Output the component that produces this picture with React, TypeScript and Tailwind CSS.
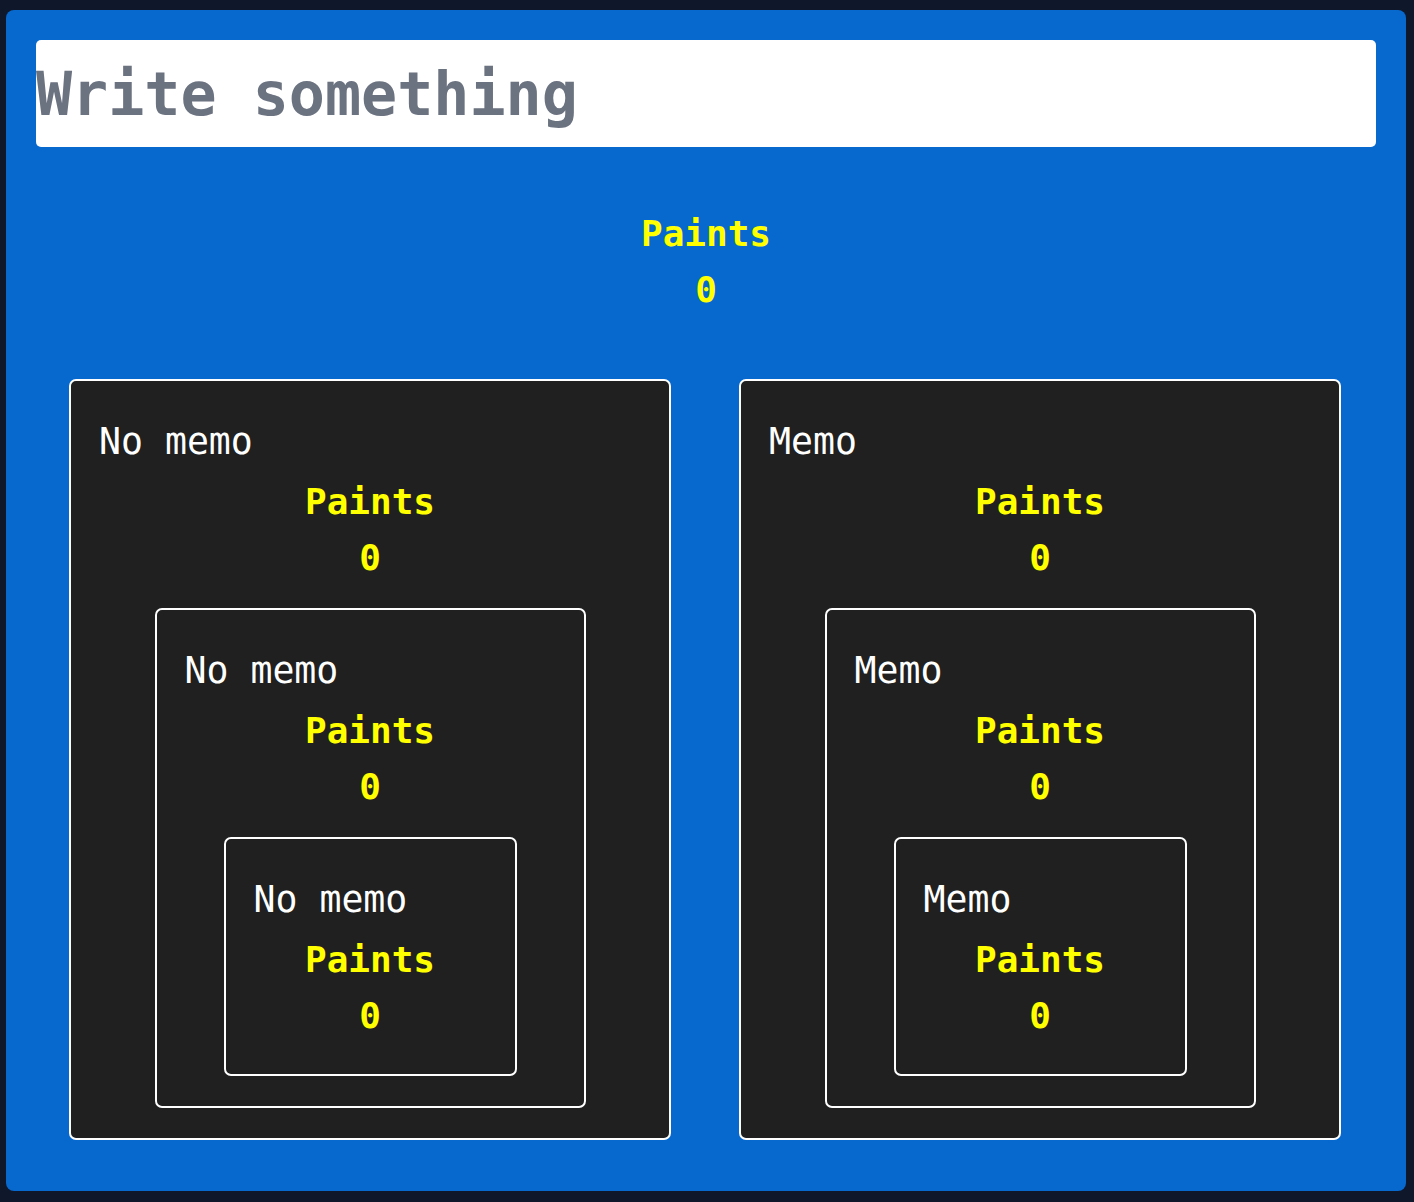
import { useState } from "react";

const mono = { fontFamily: '"DejaVu Sans Mono", "Liberation Mono", monospace' };

function Paints({ count }: { count: number }) {
  return (
    <div className="flex flex-col items-center font-bold text-[#ffff00] text-[36px] leading-[56px]">
      <span>Paints</span>
      <span>{count}</span>
    </div>
  );
}

function Box({
  label,
  width,
  children,
}: {
  label: string;
  width: string;
  children?: React.ReactNode;
}) {
  return (
    <div
      className={`${width} flex flex-col items-center bg-[#202020] border-2 border-white rounded-[7px] px-[28px] pt-[33px] pb-[30px]`}
    >
      <div className="self-stretch text-white text-[36.5px] leading-[56px]">{label}</div>
      <div className="mt-[4px]">
        <Paints count={0} />
      </div>
      {children && <div className="mt-[22px] flex justify-center w-full">{children}</div>}
    </div>
  );
}

export default function App() {
  const [text, setText] = useState("");

  return (
    <div className="min-h-screen bg-[#0f172a] pt-[10px] pb-[13px] pl-[6px]" style={mono}>
      <div className="w-[1400px] bg-[#0769ce] rounded-lg px-[30px] pt-[30px] pb-[51px]">
        <input
          type="text"
          value={text}
          onChange={(e) => setText(e.target.value)}
          placeholder="Write something"
          className="w-full h-[107px] bg-white rounded-[5px] text-[60px] font-bold text-gray-800 placeholder:text-[#6b7280] outline-none"
          style={mono}
        />

        <div className="mt-[59px]">
          <Paints count={0} />
        </div>

        <div className="mt-[61px] ml-[33px] flex gap-[68px]">
          <Box label="No memo" width="w-[602px]">
            <Box label="No memo" width="w-[431px]">
              <Box label="No memo" width="w-[293px]" />
            </Box>
          </Box>
          <Box label="Memo" width="w-[602px]">
            <Box label="Memo" width="w-[431px]">
              <Box label="Memo" width="w-[293px]" />
            </Box>
          </Box>
        </div>
      </div>
    </div>
  );
}
